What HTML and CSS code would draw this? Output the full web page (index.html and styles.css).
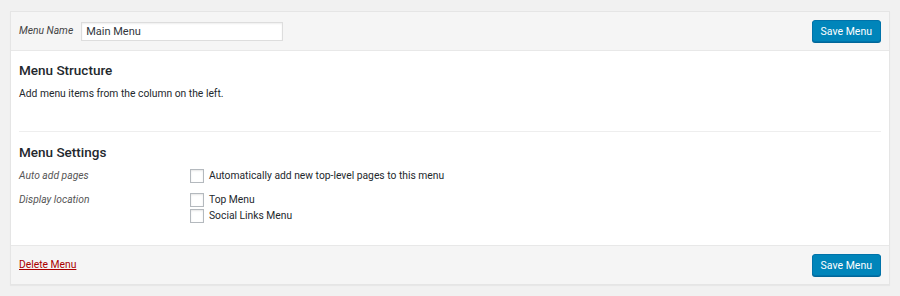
FILE: index.html
```html
<!DOCTYPE html>
<html lang="en">
<head>
  <meta charset="UTF-8" />
  <title>Edit Menus</title>
  <link rel="stylesheet" href="styles.css">
</head>
<body>

  <div class="menu-edit">
    <div class="menu-header">
      <label class="menu-name-label" for="menu-name">Menu Name</label>
      <input id="menu-name" class="menu-name" type="text" value="Main Menu" />
      <button class="save-btn">Save Menu</button>
    </div>

    <div class="menu-body">
      <h3>Menu Structure</h3>
      <p class="hint">Add menu items from the column on the left.</p>

      <div class="settings">
        <h3>Menu Settings</h3>
        <div class="setting-row">
          <span class="setting-label">Auto add pages</span>
          <div class="setting-input">
            <label class="check"><span class="box"></span>Automatically add new top-level pages to this menu</label>
          </div>
        </div>
        <div class="setting-row">
          <span class="setting-label">Display location</span>
          <div class="setting-input">
            <label class="check"><span class="box"></span>Top Menu</label>
            <label class="check"><span class="box"></span>Social Links Menu</label>
          </div>
        </div>
      </div>
    </div>

    <div class="menu-footer">
      <a href="#" class="delete-link">Delete Menu</a>
      <button class="save-btn">Save Menu</button>
    </div>
  </div>

</body>
</html>
```

FILE: styles.css
```css
body {
  margin: 0;
  padding: 11px 10px;
  background-color: #f1f1f1;
  font-family: 'Roboto', 'Liberation Sans', sans-serif;
  font-size: 10.3px;
  line-height: 14px;
  color: #23282d;
}

.menu-edit {
  border: 1px solid #e5e5e5;
  background-color: #fff;
  box-shadow: 0 1px 1px rgba(0, 0, 0, 0.04);
}

.menu-header, .menu-footer {
  display: flex;
  align-items: center;
  background-color: #f5f5f5;
  padding: 0 8px;
  height: 38px;
}

.menu-header {
  border-bottom: 1px solid #e8e8e8;
}

.menu-footer {
  border-top: 1px solid #e8e8e8;
}

.menu-name-label {
  font-style: italic;
  color: #444;
  margin-right: 8px;
}

.menu-name {
  width: 202px;
  height: 19px;
  box-sizing: border-box;
  border: 1px solid #ddd;
  box-shadow: inset 0 1px 2px rgba(0, 0, 0, 0.07);
  padding: 0 4px;
  font-family: inherit;
  font-size: 11px;
  color: #32373c;
}

.save-btn {
  margin-left: auto;
  height: 22px;
  padding: 0 8px;
  font-family: inherit;
  font-size: 10.5px;
  background-color: #0085ba;
  color: #fff;
  border: 1px solid #0073aa;
  border-radius: 3px;
  box-shadow: 0 1px 0 #006799;
  cursor: pointer;
}

.menu-body {
  padding: 0 8px 22px;
}

.menu-body h3 {
  margin: 0;
  font-size: 13.5px;
  line-height: 18px;
  font-weight: 500;
}

.menu-body > h3 {
  padding-top: 10px;
}

.hint {
  margin: 8px 0 0;
}

.settings {
  margin-top: 30px;
  border-top: 1px solid #eee;
  padding-top: 11px;
}

.setting-row {
  display: flex;
  margin-top: 8px;
}

.setting-row + .setting-row {
  margin-top: 10px;
}

.setting-label {
  width: 171px;
  font-style: italic;
  color: #555;
}

.setting-input {
  display: flex;
  flex-direction: column;
  gap: 2px;
}

.check {
  display: flex;
  align-items: center;
  gap: 5px;
}

.box {
  width: 12px;
  height: 12px;
  border: 1px solid #b4b9be;
  background-color: #fff;
  box-shadow: inset 0 1px 2px rgba(0, 0, 0, 0.1);
}

.delete-link {
  color: #a00;
}
```
